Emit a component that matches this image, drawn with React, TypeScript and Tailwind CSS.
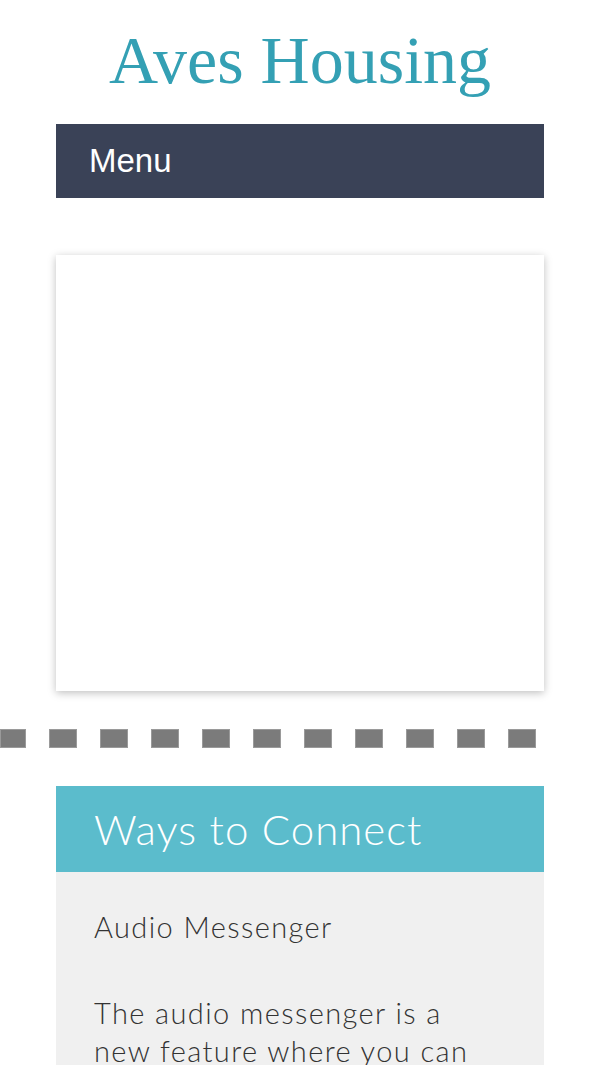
import React from "react";

export default function App() {
  const dashes = Array.from({ length: 11 });
  return (
    <div className="w-[600px] h-[1065px] overflow-hidden bg-white">
      <div className="flex justify-center pt-[18px] h-[124px]">
        <h1
          className="text-[68px] leading-[84px] text-[#34a0b4]"
          style={{ fontFamily: '"Liberation Serif", serif' }}
        >
          Aves Housing
        </h1>
      </div>
      <div className="mx-[56px] h-[74px] bg-[#3a4257] flex items-center pl-[33px]">
        <span
          className="text-[33px] text-white"
          style={{ fontFamily: '"Liberation Sans", Arial, sans-serif' }}
        >
          Menu
        </span>
      </div>
      <div className="mx-[56px] mt-[57px] h-[436px] bg-white shadow-[0_2px_8px_rgba(0,0,0,0.25)]" />
      <div className="mt-[38px] flex gap-[23px] h-[19px]">
        {dashes.map((_, i) => (
          <div
            key={i}
            className={`h-[19px] bg-[#7b7b7b] border border-[#9a9a9a] ${i === 0 ? "w-[26px]" : "w-[28px]"}`}
          />
        ))}
      </div>
      <div className="mx-[56px] mt-[38px]" style={{ fontFamily: 'Lato, "Open Sans", sans-serif' }}>
        <div className="h-[86px] bg-[#5bbccc] flex items-center pl-[38px]">
          <h2 className="text-[42px] font-light text-white tracking-[1px]">Ways to Connect</h2>
        </div>
        <div className="bg-[#f0f0f0] pl-[38px] pr-[50px] pt-[36px] pb-[40px] text-[#333333] font-light tracking-[1.4px]">
          <p className="text-[29px] leading-[38px]">Audio Messenger</p>
          <p className="text-[29px] leading-[38px] mt-[48px]">
            The audio messenger is a new feature where you can leave a message for us.
          </p>
        </div>
      </div>
    </div>
  );
}
